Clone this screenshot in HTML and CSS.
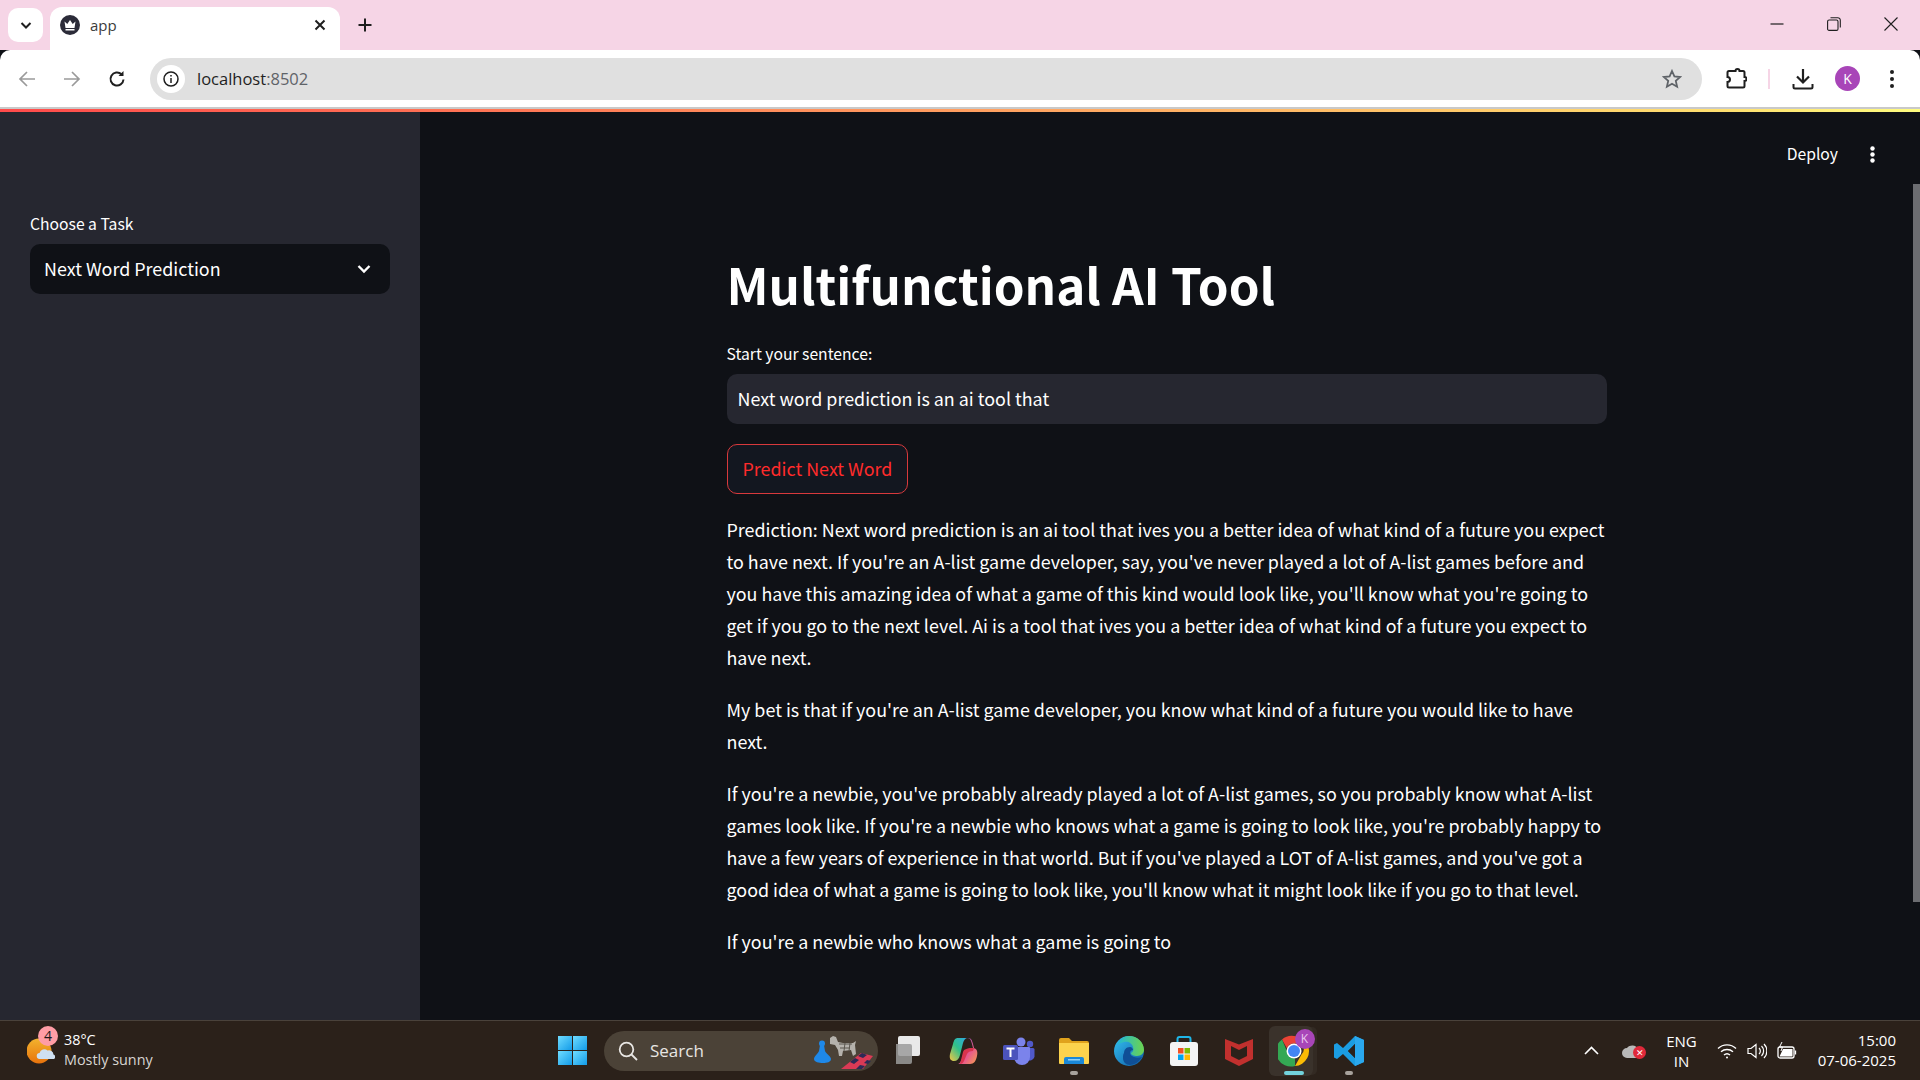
FILE: index.html
```html
<!DOCTYPE html>
<html lang="en">
<head>
  <meta charset="UTF-8" />
  <title>app</title>
  <link rel="stylesheet" href="styles.css">
</head>
<body>

  <!-- browser tabs -->
  <div class="tabstrip">
    <div class="tab-search">
      <svg width="14" height="14" viewBox="0 0 14 14"><path d="M2.5 5 7 9.5 11.5 5" fill="none" stroke="#1f1f1f" stroke-width="2"/></svg>
    </div>
    <div class="tab">
      <svg class="favicon" width="20" height="20" viewBox="0 0 20 20">
        <circle cx="10" cy="10" r="10" fill="#2b2b38"/>
        <path d="M4.5 6.5 7.3 9 10 5l2.7 4 2.8-2.500-1 6.500h-9z" fill="#fff"/>
        <rect x="5.500" y="14" width="9" height="1.500" fill="#fff"/>
      </svg>
      <span class="tab-title">app</span>
      <svg width="12" height="12" viewBox="0 0 12 12"><path d="M1.500 1.500l9 9M10.500 1.500l-9 9" stroke="#1f1f1f" stroke-width="2"/></svg>
    </div>
    <svg class="new-tab" width="14" height="14" viewBox="0 0 14 14"><path d="M7 .5v13M.5 7h13" stroke="#1f1f1f" stroke-width="2"/></svg>
    <div class="win-controls">
      <svg width="14" height="14" viewBox="0 0 14 14"><path d="M.5 7h13" stroke="#1f1f1f" stroke-width="1.200"/></svg>
      <svg width="14" height="14" viewBox="0 0 14 14" fill="none" stroke="#1f1f1f" stroke-width="1.100"><rect x=".6" y="3" width="10.400" height="10.400" rx="1.500"/><path d="M3.500 .7h7.300a2.500 2.500 0 0 1 2.500 2.500v7.300"/></svg>
      <svg width="14" height="14" viewBox="0 0 14 14"><path d="M.5.500l13 13M13.500.500l-13 13" stroke="#1f1f1f" stroke-width="1.100"/></svg>
    </div>
  </div>

  <!-- address bar -->
  <div class="toolbar">
    <svg class="nav-btn" width="18" height="18" viewBox="0 0 18 18" fill="none" stroke="#9a9a9a" stroke-width="1.700"><path d="M17 9H2M9 2 2 9l7 7"/></svg>
    <svg class="nav-btn" width="18" height="18" viewBox="0 0 18 18" fill="none" stroke="#9a9a9a" stroke-width="1.700"><path d="M1 9h15M9 2l7 7-7 7"/></svg>
    <svg class="nav-btn" width="18" height="18" viewBox="0 0 18 18" fill="none" stroke="#1f1f1f" stroke-width="2"><path d="M15.500 9.500a6.500 6.500 0 1 1-2-5.200"/><path d="M15.500 1v5h-5" fill="#1f1f1f" stroke="none"/></svg>
    <div class="omnibox">
      <span class="site-info">
        <svg width="16" height="16" viewBox="0 0 16 16" fill="none" stroke="#1f1f1f" stroke-width="1.500"><circle cx="8" cy="8" r="7"/><path d="M8 7v5M8 4v1.600"/></svg>
      </span>
      <span class="url">localhost<span class="url-port">:8502</span></span>
      <svg class="star" width="20" height="20" viewBox="0 0 20 20"><path d="M10 2l2.400 5.400 5.800.6-4.400 3.900 1.300 5.800L10 14.700 4.900 17.700l1.300-5.800L1.800 8l5.800-.6z" fill="none" stroke="#5f6368" stroke-width="1.800"/></svg>
    </div>
    <svg class="ext" width="22" height="22" viewBox="0 0 22 22"><path d="M8 3h2.500a2 2 0 0 1 4 0H18a1.500 1.500 0 0 1 1.500 1.500V9a2 2 0 0 1 0 4v5a1.500 1.500 0 0 1-1.500 1.500H4a1.500 1.500 0 0 1-1.500-1.500v-4a2.500 2.500 0 0 0 0-5V4.500A1.500 1.500 0 0 1 4 3z" fill="none" stroke="#1f1f1f" stroke-width="2"/></svg>
    <span class="tool-divider"></span>
    <svg class="download" width="22" height="22" viewBox="0 0 22 22" fill="none" stroke="#1f1f1f" stroke-width="2.200"><path d="M11 1v13M5 8.500l6 6 6-6"/><path d="M1.500 16v3a1.500 1.500 0 0 0 1.500 1.500h16a1.500 1.500 0 0 0 1.500-1.500v-3" stroke-width="2"/></svg>
    <span class="avatar">K</span>
    <svg class="menu-dots" width="4" height="18" viewBox="0 0 4 18"><circle cx="2" cy="2" r="2" fill="#1f1f1f"/><circle cx="2" cy="9" r="2" fill="#1f1f1f"/><circle cx="2" cy="16" r="2" fill="#1f1f1f"/></svg>
  </div>
  <div class="stream-line"></div>

  <div class="app">
    <aside class="sidebar">
      <label class="field-label">Choose a Task</label>
      <div class="select">
        <span>Next Word Prediction</span>
        <svg width="16" height="16" viewBox="0 0 16 16"><path d="M2.500 5 8 10.500 13.500 5" fill="none" stroke="#fff" stroke-width="2.400"/></svg>
      </div>
    </aside>

    <main class="main">
      <div class="app-header">
        <span class="deploy">Deploy</span>
        <svg width="5" height="17" viewBox="0 0 5 17"><circle cx="2.500" cy="2.500" r="2.200" fill="#fff"/><circle cx="2.500" cy="8.500" r="2.200" fill="#fff"/><circle cx="2.500" cy="14.500" r="2.200" fill="#fff"/></svg>
      </div>
      <div class="block">
        <h1>Multifunctional AI Tool</h1>
        <label class="field-label">Start your sentence:</label>
        <div class="text-input">Next word prediction is an ai tool that</div>
        <button class="predict">Predict Next Word</button>
        <p>Prediction: Next word prediction is an ai tool that ives you a better idea of what kind of a future you expect to have next. If you're an A-list game developer, say, you've never played a lot of A-list games before and you have this amazing idea of what a game of this kind would look like, you'll know what you're going to get if you go to the next level. Ai is a tool that ives you a better idea of what kind of a future you expect to have next.</p>
        <p>My bet is that if you're an A-list game developer, you know what kind of a future you would like to have next.</p>
        <p>If you're a newbie, you've probably already played a lot of A-list games, so you probably know what A-list games look like. If you're a newbie who knows what a game is going to look like, you're probably happy to have a few years of experience in that world. But if you've played a LOT of A-list games, and you've got a good idea of what a game is going to look like, you'll know what it might look like if you go to that level.</p>
        <p>If you're a newbie who knows what a game is going to</p>
      </div>
      <div class="scrollbar"></div>
    </main>
  </div>

  <!-- windows taskbar -->
  <footer class="taskbar">
    <div class="weather">
      <div class="weather-icon">
        <svg width="28" height="28" viewBox="0 0 28 28">
          <defs><linearGradient id="sun" x1="0" y1="0" x2="0" y2="1"><stop offset="0" stop-color="#f2b32e"/><stop offset="1" stop-color="#e8730c"/></linearGradient></defs>
          <circle cx="12" cy="14" r="12.500" fill="url(#sun)"/>
          <path d="M13 22a3 3 0 0 1-.5-6 5 5 0 0 1 8-2.500 4.500 4.500 0 0 1 6 4A2.500 2.500 0 0 1 27 22z" fill="#cfe0f2"/>
        </svg>
        <span class="badge">4</span>
      </div>
      <div class="weather-text">
        <span>38°C</span>
        <span class="weather-sub">Mostly sunny</span>
      </div>
    </div>

    <div class="win-logo">
      <span></span><span></span><span></span><span></span>
    </div>

    <div class="search-pill">
      <svg width="20" height="20" viewBox="0 0 20 20" fill="none" stroke="#e8e6e3" stroke-width="1.800"><circle cx="8.500" cy="8.500" r="6.800"/><path d="M13.500 13.500 19 19"/></svg>
      <span class="search-text">Search</span>
      <svg class="search-art" width="62" height="40" viewBox="0 0 62 40">
        <circle cx="8" cy="12.500" r="3" fill="#1e88e8"/>
        <path d="M6 14h4l1 6c1 3 6 5 6 8 0 3-4 4-8 4s-9-1-9-4c0-3 4-5 5-8z" fill="#1e88e8"/>
        <path d="M16 7l3-2 3 1 2 5 5 1h10l3-2-1 4 1 9-3 2-2-6-8 1-1 5h-3l-1-6-3-5-5-1z" fill="#b5b2ac"/>
        <path d="M25 13l13 0M26 17l10 0M31 12l-1 8M36 12l-1 8" stroke="#5b574f" stroke-width="1"/>
        <path d="M27 38l20-16 12 3-10 13z" fill="#d93a55"/>
        <path d="M36 31l5-4 4 2-5 4zM44 25l4-3 5 2-4 3zM42 38l4-4 5 1-3 3zM50 32l3-3 4 1-3 3z" fill="#2c2a55"/>
      </svg>
    </div>

    <div class="task-icons">
      <span class="task-btn">
        <svg width="26" height="30" viewBox="0 0 26 30">
          <rect x="2" y="0" width="22" height="20" rx="2" fill="#e9e9e9"/>
          <rect x="-4" y="8" width="20" height="20" rx="2" fill="#9b9b9b" fill-opacity=".85"/>
        </svg>
      </span>
      <span class="task-btn">
        <svg width="30" height="28" viewBox="0 0 30 28">
          <defs>
            <linearGradient id="cp2" x1="0" y1="1" x2="1" y2="0"><stop offset="0" stop-color="#f6c744"/><stop offset=".5" stop-color="#2fc08a"/><stop offset="1" stop-color="#2fa8e8"/></linearGradient>
            <linearGradient id="cp3" x1="0" y1="0" x2="1" y2="1"><stop offset="0" stop-color="#8a5be0"/><stop offset=".6" stop-color="#e85a8c"/><stop offset="1" stop-color="#f5a04c"/></linearGradient>
          </defs>
          <path d="M9 1h10c-3 0-4 2-5 5l-3 12c-1 4-3 6-6 6-3 0-5-2-4-7l3-10c1-4 2-6 5-6z" fill="url(#cp2)"/>
          <path d="M19 1c3 0 4 2 5 6l1 4c-5 0-8 1-9 4l-4 9c-1 2-2 3-3 3h12c4 0 6-3 7-8 1-4 0-8-4-8l-1-4c-1-4-2-6-4-6z" fill="url(#cp3)"/>
          <path d="M14 15c1-3 4-4 11-4l-1 3c-3 0-5 1-6 3l-3 7c-1 2-2 3-4 3z" fill="#d9354e"/>
        </svg>
      </span>
      <span class="task-btn">
        <svg width="32" height="28" viewBox="0 0 32 28">
          <circle cx="18" cy="5" r="4.500" fill="#7b83eb"/>
          <circle cx="27" cy="7" r="3.200" fill="#5059c9"/>
          <path d="M22 11h8a1.500 1.500 0 0 1 1.500 1.500v7a5 5 0 0 1-8 3z" fill="#5059c9"/>
          <path d="M11 10h15a1 1 0 0 1 1 1v9a8 8 0 0 1-16 0z" fill="#7b83eb"/>
          <rect x="0" y="8" width="15" height="15" rx="1.500" fill="#4b53bc"/>
          <path d="M3.500 11.500h8M7.500 11.500v8.500" stroke="#fff" stroke-width="2"/>
        </svg>
      </span>
      <span class="task-btn is-open">
        <svg width="30" height="28" viewBox="0 0 30 28">
          <path d="M0 3a2 2 0 0 1 2-2h8l3 3h15a2 2 0 0 1 2 2v4H0z" fill="#e0a21c"/>
          <path d="M0 6h30v20a1 1 0 0 1-1 1H1a1 1 0 0 1-1-1z" fill="#fcd34d"/>
          <path d="M5 27v-5a2 2 0 0 1 2-2h16a2 2 0 0 1 2 2v5z" fill="#1a88d8"/>
          <rect x="9" y="22" width="12" height="1.500" fill="#8fd0f8"/>
        </svg>
      </span>
      <span class="task-btn">
        <svg width="30" height="30" viewBox="0 0 30 30">
          <defs>
            <linearGradient id="edge1" x1="0" y1="0" x2="1" y2="1"><stop offset="0" stop-color="#35c1f1"/><stop offset="1" stop-color="#0c59a4"/></linearGradient>
            <linearGradient id="edge2" x1="0" y1="0" x2="1" y2="0"><stop offset="0" stop-color="#1fb8d8"/><stop offset="1" stop-color="#6dd34d"/></linearGradient>
          </defs>
          <circle cx="15" cy="15" r="15" fill="url(#edge1)"/>
          <path d="M3 9C6 3 11 0 15 0c8 0 15 6 15 14 0 3-3 6-7 6-3 0-6-1-6-3 2-1 3-3 2-6-1-4-5-6-9-5-3 1-6 2-7 3z" fill="url(#edge2)"/>
          <path d="M10 17c0-3 2-6 6-6 2 0 3 2 3 3-3 0-4 4-1 6 3 2 7 2 10 1-3 5-8 8-12 8-4 0-7-3-7-7 0-2 0-4 1-5z" fill="#0f4f96"/>
        </svg>
      </span>
      <span class="task-btn">
        <svg width="30" height="30" viewBox="0 0 30 30">
          <path d="M8.500 7V3a2 2 0 0 1 2-2h9a2 2 0 0 1 2 2v4" fill="none" stroke="#1fb6e8" stroke-width="2"/>
          <rect x="1" y="6" width="28" height="24" rx="3" fill="#f4f4f4"/>
          <rect x="9" y="12" width="5.500" height="5.500" fill="#f25022"/>
          <rect x="15.500" y="12" width="5.500" height="5.500" fill="#7fba00"/>
          <rect x="9" y="18.500" width="5.500" height="5.500" fill="#00a4ef"/>
          <rect x="15.500" y="18.500" width="5.500" height="5.500" fill="#ffb900"/>
        </svg>
      </span>
      <span class="task-btn">
        <svg width="28" height="30" viewBox="0 0 28 30"><path d="M0 3l14 5.500L28 3v20l-14 7-14-7zM6 10v10l8 4 8-4V10l-8 4z" fill="#c1302e"/></svg>
      </span>
      <span class="task-btn is-active">
        <svg width="32" height="32" viewBox="0 0 32 32">
          <path d="M16 1a15 15 0 0 1 13 7.500H16a7.500 7.500 0 0 0-7 5L4 4.500A15 15 0 0 1 16 1z" fill="#ea4335"/>
          <path d="M29 8.500A15 15 0 0 1 17 31l6.500-11.500a7.500 7.500 0 0 0 0-11z" fill="#fbbc04"/>
          <path d="M4 4.500 10.500 20a7.500 7.500 0 0 0 6.500 3.500L17 31A15 15 0 0 1 4 4.500z" fill="#34a853"/>
          <circle cx="16" cy="16" r="7.500" fill="#fff"/>
          <circle cx="16" cy="16" r="6" fill="#4285f4"/>
        </svg>
        <span class="chrome-badge">K</span>
      </span>
      <span class="task-btn is-open">
        <svg width="30" height="30" viewBox="0 0 30 30">
          <path d="M21 0l9 4v22l-9 4L9 18l-6 5-3-1.500v-13L3 7l6 5zM21 8l-7 7 7 7z" fill="#1b9de2"/>
          <path d="M21 0l9 4v22l-9 4z" fill="#2aa8ee"/>
          <path d="M21 8l-7 7 7 7z" fill="#2b211a"/>
        </svg>
      </span>
    </div>

    <div class="tray">
      <svg width="15" height="9" viewBox="0 0 15 9"><path d="M1 8l6.500-6.500L14 8" fill="none" stroke="#fff" stroke-width="1.600"/></svg>
      <span class="cloud-alert">
        <svg width="20" height="14" viewBox="0 0 20 14"><path d="M5 14a5 5 0 0 1 0-10 6.500 6.500 0 0 1 11 1 4.500 4.500 0 0 1 0 9z" fill="#b9b9b9"/></svg>
        <span class="alert-dot">✕</span>
      </span>
      <span class="lang">ENG<br>IN</span>
      <svg class="tray-wifi" width="20" height="16" viewBox="0 0 20 16" fill="none" stroke="#fff" stroke-width="1.400"><path d="M1 5.500a13 13 0 0 1 18 0M4 8.800a9 9 0 0 1 12 0M7 12a4.500 4.500 0 0 1 6 0"/><circle cx="10" cy="14.500" r="1" fill="#fff" stroke="none"/></svg>
      <svg class="tray-vol" width="20" height="16" viewBox="0 0 20 16" fill="none" stroke="#fff" stroke-width="1.200"><path d="M1 5.500h3L9 1.500v13l-5-4H1zM12 5a4 4 0 0 1 0 6M14.500 3a7 7 0 0 1 0 10M17 1a10 10 0 0 1 0 14"/></svg>
      <svg class="tray-batt" width="20" height="18" viewBox="0 0 20 18" fill="none" stroke="#fff" stroke-width="1.300"><rect x="1" y="5" width="16" height="11" rx="2"/><path d="M18.500 8.500v4"/><path d="M2.500 14.500 6 7h9.500v7.500z" fill="#fff" stroke="none"/><path d="M5 0 2.500 5h3L4 9" stroke-width="1"/></svg>
      <div class="clock"><span>15:00</span><span>07-06-2025</span></div>
    </div>
  </footer>

</body>
</html>
```

FILE: styles.css
```css
* {
  box-sizing: border-box;
}
html, body {
  margin: 0;
  height: 100%;
}
body {
  width: 1920px;
  height: 1080px;
  overflow: hidden;
  display: flex;
  flex-direction: column;
  font-family: "Noto Sans CJK SC", "Noto Sans CJK JP", sans-serif;
  color: #fff;
  background: #0f1116;
}

/* browser chrome */
.tabstrip {
  height: 50px;
  flex: none;
  background: #f6d5e6;
  display: flex;
  align-items: flex-start;
  font-family: "Open Sans", sans-serif;
}
.tab-search {
  width: 35px;
  height: 34px;
  margin: 8px 0 0 8px;
  background: #fff;
  border-radius: 10px;
  display: flex;
  align-items: center;
  justify-content: center;
}
.tab {
  width: 290px;
  height: 43px;
  margin: 7px 0 0 7px;
  padding: 0 14px 7px 10px;
  background: #fff;
  border-radius: 12px 12px 0 0;
  display: flex;
  align-items: center;
}
.tab-title {
  margin-left: 10px;
  flex: 1;
  font-size: 15px;
  color: #3c3c3c;
}
.new-tab {
  margin: 18px 0 0 18px;
}
.win-controls {
  margin-left: auto;
  margin-right: 22px;
  margin-top: 17px;
  display: flex;
  gap: 43px;
}

.toolbar {
  height: 57px;
  flex: none;
  background: #fff;
  border-radius: 10px 10px 0 0;
  display: flex;
  align-items: center;
  padding-left: 18px;
  font-family: "Open Sans", sans-serif;
}
.nav-btn {
  margin-right: 27px;
}
.nav-btn:nth-child(3) {
  margin-right: 24px;
}
.omnibox {
  width: 1552px;
  height: 42px;
  background: #e0e0e0;
  border-radius: 21px;
  display: flex;
  align-items: center;
  padding: 0 20px 0 7px;
}
.site-info {
  width: 28px;
  height: 28px;
  border-radius: 50%;
  background: #fff;
  display: flex;
  align-items: center;
  justify-content: center;
}
.url {
  margin-left: 12px;
  font-size: 16.500px;
  color: #1f1f1f;
}
.url-port {
  color: #5f6368;
}
.star {
  margin-left: auto;
}
.ext {
  margin-left: 23px;
}
.tool-divider {
  width: 2px;
  height: 20px;
  margin-left: 21px;
  background: #f6d5e6;
}
.download {
  margin-left: 22px;
}
.avatar {
  width: 25px;
  height: 25px;
  margin-left: 21px;
  border-radius: 50%;
  background: #a845b8;
  color: #fff;
  font-size: 14px;
  display: flex;
  align-items: center;
  justify-content: center;
}
.menu-dots {
  margin-left: 30px;
}
.stream-line {
  height: 5px;
  flex: none;
  border-top: 2px solid #c9c9c9;
  background: linear-gradient(90deg, #ff4b4b, #ffe070 90%, #fffd80);
}

/* streamlit app */
.app {
  flex: 1;
  min-height: 0;
  display: flex;
}
.sidebar {
  width: 420px;
  flex: none;
  background: #262730;
  padding: 100px 30px 0;
}
.field-label {
  display: block;
  font-size: 15.700px;
  line-height: 24px;
}
.select {
  height: 50px;
  margin-top: 8px;
  padding: 0 18px 2px 14px;
  background: #0f1116;
  border-radius: 10px;
  display: flex;
  align-items: center;
  justify-content: space-between;
  font-size: 17.900px;
}
.select svg {
  margin-top: 2px;
}
.main {
  flex: 1;
  position: relative;
  padding-left: 306.500px;
}
.app-header {
  position: absolute;
  top: 30px;
  right: 45px;
  display: flex;
  align-items: center;
  gap: 32px;
  font-size: 15.700px;
  line-height: 24px;
}
.block {
  width: 880px;
  padding-top: 133px;
}
h1 {
  margin: 0 0 19px;
  font-size: 49.300px;
  font-weight: 700;
  line-height: 78px;
}
.text-input {
  height: 50px;
  margin-top: 8px;
  padding: 0 11px 2px;
  background: #262730;
  border-radius: 10px;
  display: flex;
  align-items: center;
  font-size: 17.900px;
}
.predict {
  display: block;
  height: 50px;
  margin: 20px 0 19px;
  padding: 0 15px 2px;
  background: #131720;
  border: 1px solid #d8393c;
  border-radius: 10px;
  color: #ff2b2b;
  font-family: inherit;
  font-size: 17.900px;
}
p {
  margin: 0 0 20px;
  font-size: 17.900px;
  line-height: 32px;
}
.scrollbar {
  position: absolute;
  top: 72px;
  right: 0;
  width: 7px;
  height: 718px;
  background: #6c6d71;
}

/* taskbar */
.taskbar {
  height: 60px;
  flex: none;
  background: #2b211a;
  border-top: 1px solid #4a423b;
  display: flex;
  align-items: center;
  font-family: "Open Sans", sans-serif;
  color: #fff;
  font-size: 14.400px;
}
.weather {
  width: 558px;
  padding-left: 27px;
  display: flex;
  align-items: center;
  gap: 9px;
}
.weather-icon {
  position: relative;
  width: 28px;
  height: 28px;
}
.badge {
  position: absolute;
  top: -11px;
  left: 11px;
  width: 20px;
  height: 20px;
  border-radius: 50%;
  background: #ff9da5;
  color: #1a1a1a;
  font-size: 14px;
  line-height: 20px;
  text-align: center;
}
.weather-text {
  display: flex;
  flex-direction: column;
  margin-top: -2px;
  line-height: 20px;
}
.weather-sub {
  color: #d8d5d2;
}
.win-logo {
  width: 29px;
  height: 29px;
  display: grid;
  grid-template-columns: 1fr 1fr;
  gap: 1px;
}
.win-logo span {
  background: linear-gradient(135deg, #6fdcff, #129be8);
}
.search-pill {
  width: 274px;
  height: 40px;
  margin-left: 17px;
  padding-left: 14px;
  background: #4b4237;
  border-radius: 20px;
  display: flex;
  align-items: center;
  position: relative;
  overflow: hidden;
}
.search-text {
  margin-left: 12px;
  font-size: 17px;
  color: #e8e6e3;
}
.search-art {
  position: absolute;
  right: 2px;
  top: 0;
}
.task-icons {
  display: flex;
  align-items: center;
  margin-left: 3px;
  width: 486px;
}
.task-btn {
  position: relative;
  width: 55px;
  height: 50px;
  flex: none;
  display: flex;
  align-items: center;
  justify-content: center;
}
.task-btn.is-open::after,
.task-btn.is-active::after {
  content: "";
  position: absolute;
  left: 50%;
  bottom: 1px;
  width: 8px;
  height: 4px;
  margin-left: -4px;
  border-radius: 2px;
  background: #a8a29c;
}
.task-btn.is-active {
  width: 44px;
  margin: 0 8.500px 0 2.500px;
  padding-left: 6px;
  background: #3a322b;
  border-radius: 6px;
  box-shadow: 5px 0 0 -1px #332a23;
}
.task-btn.is-active::after {
  width: 20px;
  margin-left: -7px;
  background: #72d2dc;
}
.chrome-badge {
  position: absolute;
  top: 3px;
  right: -2px;
  width: 20px;
  height: 20px;
  border-radius: 50%;
  background: #a845b8;
  color: #e8c8ee;
  font-size: 12px;
  line-height: 20px;
  text-align: center;
}
.tray {
  flex: 1;
  display: flex;
  align-items: center;
  justify-content: flex-end;
  padding-right: 24px;
}
.cloud-alert {
  position: relative;
  margin-left: 23px;
  display: flex;
}
.alert-dot {
  position: absolute;
  right: -4px;
  top: 2px;
  width: 13px;
  height: 13px;
  border-radius: 50%;
  background: #e0293a;
  font-size: 9px;
  line-height: 13px;
  text-align: center;
}
.lang {
  margin-left: 24px;
  font-size: 15px;
  line-height: 20px;
  text-align: center;
}
.tray-wifi {
  margin-left: 20px;
}
.tray-vol {
  margin-left: 10px;
}
.tray-batt {
  margin-left: 10px;
}
.clock {
  margin-left: 21px;
  margin-top: -2px;
  display: flex;
  flex-direction: column;
  align-items: flex-end;
  font-size: 15px;
  line-height: 20px;
}
```
